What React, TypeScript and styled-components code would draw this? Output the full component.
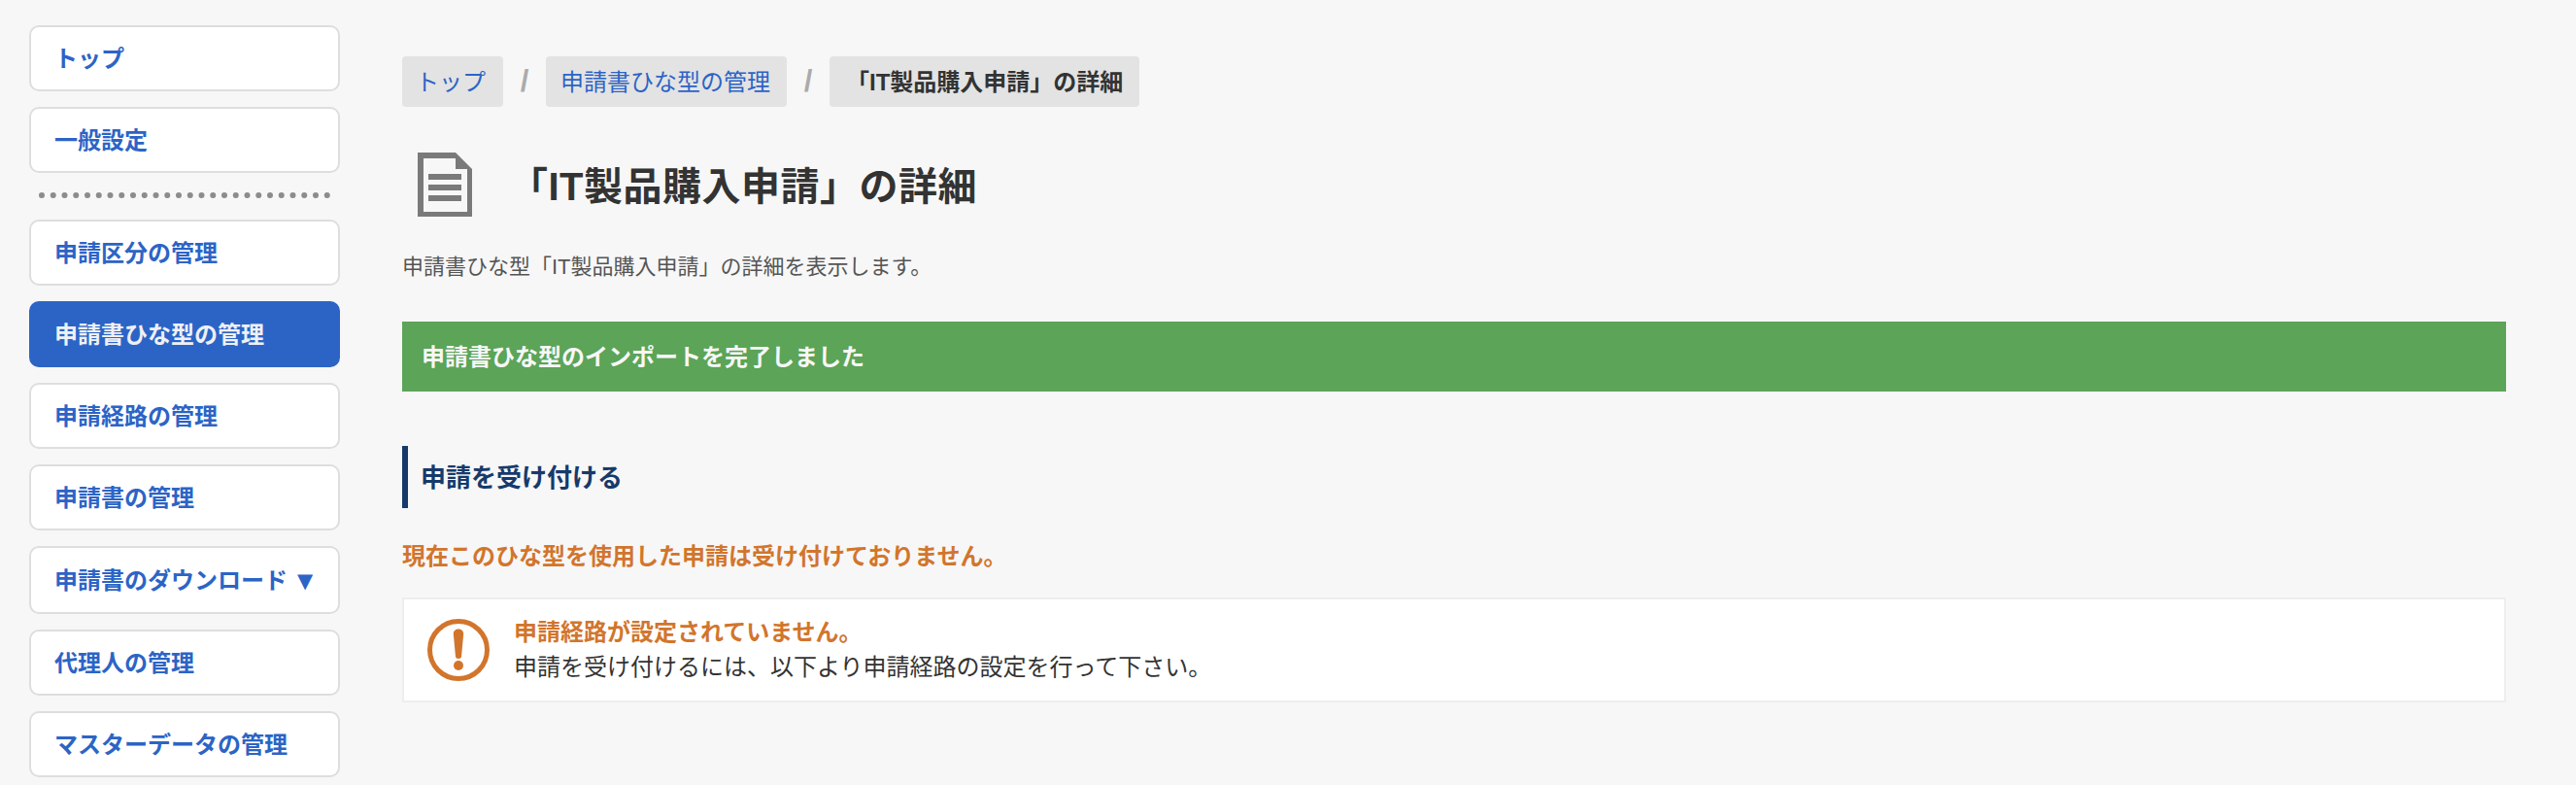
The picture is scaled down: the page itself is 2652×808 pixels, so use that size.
import React from "react";
import styled, { createGlobalStyle } from "styled-components";

const Global = createGlobalStyle`
  html, body { margin: 0; padding: 0; background: #f7f7f7; }
  body { font-family: "Liberation Sans", "Noto Sans CJK JP", sans-serif; }
  * { box-sizing: border-box; }
`;

const Page = styled.div`
  display: flex;
  align-items: flex-start;
  width: 2652px;
  height: 808px;
  overflow: hidden;
  background: #f7f7f7;
`;

const Sidebar = styled.nav`
  display: flex;
  flex-direction: column;
  flex: 0 0 320px;
  gap: 16px;
  margin: 26px 0 0 30px;
`;

const NavItem = styled.a<{ $active?: boolean; $tall?: boolean }>`
  display: flex;
  align-items: center;
  height: ${(p) => (p.$tall ? "70px" : "68px")};
  padding: 0 0 3px 24px;
  border: 2px solid ${(p) => (p.$active ? "#2c64c6" : "#dedede")};
  border-radius: 10px;
  background: ${(p) => (p.$active ? "#2c64c6" : "#fff")};
  color: ${(p) => (p.$active ? "#eef0f4" : "#2c64c6")};
  font-size: 24px;
  font-weight: 700;
  white-space: nowrap;
`;

const Caret = styled.span`
  margin: 5px 0 0 10px;
  font-size: 21px;
  line-height: 1;
  font-family: "DejaVu Sans", sans-serif;
`;

const Dots = styled.div`
  height: 6px;
  margin: 4px 10px 6px;
  border-top: 6px dotted #8c8c8c;
`;

const Main = styled.main`
  flex: 0 0 2166px;
  margin: 58px 0 0 64px;
`;

const Breadcrumb = styled.div`
  display: flex;
  align-items: center;
  height: 52px;
`;

const Crumb = styled.a<{ $current?: boolean; $first?: boolean }>`
  display: flex;
  align-items: center;
  height: 52px;
  padding: 0 ${(p) => (p.$current ? "17px" : p.$first ? "18px" : "17px")} 3px
    ${(p) => (p.$current ? "17px" : p.$first ? "14px" : "15px")};
  border-radius: 4px;
  background: #e3e3e3;
  color: ${(p) => (p.$current ? "#333" : "#2c64c6")};
  font-size: 24px;
  font-weight: ${(p) => (p.$current ? 700 : 400)};
  white-space: nowrap;
`;

const Sep = styled.span`
  width: 44px;
  text-align: center;
  color: #ababab;
  font-size: 31px;
  font-weight: 700;
`;

const TitleRow = styled.div`
  display: flex;
  align-items: center;
  height: 66px;
  margin-top: 47px;
  padding-left: 16px;
`;

const Title = styled.h1`
  margin: 0 0 2px 38px;
  color: #333;
  font-size: 40px;
  font-weight: 700;
  letter-spacing: 0.5px;
  white-space: nowrap;
`;

const Desc = styled.p`
  margin: 36px 0 0;
  color: #555;
  font-size: 22px;
  line-height: 32px;
`;

const Notice = styled.div`
  display: flex;
  align-items: center;
  height: 72px;
  margin-top: 40px;
  padding: 0 0 3px 20px;
  background: #5ba458;
  color: #f7f7f7;
  font-size: 24px;
  font-weight: 700;
`;

const SectionHead = styled.h2`
  display: flex;
  align-items: center;
  height: 64px;
  margin: 56px 0 0;
  padding: 0 0 3px 13px;
  border-left: 6px solid #163a6b;
  color: #163a6b;
  font-size: 26px;
  font-weight: 700;
`;

const Warning = styled.p`
  margin: 32px 0 0;
  color: #d2752c;
  font-size: 24px;
  font-weight: 700;
  line-height: 36px;
`;

const AlertBox = styled.div`
  display: flex;
  align-items: center;
  height: 108px;
  margin-top: 24px;
  padding-left: 24px;
  border: 2px solid #eeeeee;
  background: #fff;
`;

const AlertText = styled.div`
  display: flex;
  flex-direction: column;
  margin-left: 25px;
`;

const AlertTitle = styled.div`
  color: #d2752c;
  font-size: 24px;
  font-weight: 700;
  line-height: 36px;
`;

const AlertBody = styled.div`
  color: #333;
  font-size: 24px;
  line-height: 36px;
`;

const DocIcon = () => (
  <svg width="56" height="66" viewBox="0 0 56 66" aria-hidden="true">
    <path
      fill="#7a7a7a"
      fillRule="evenodd"
      d="M0 0H39L56 17V66H0ZM6 6V61H51V17H39V6Z"
    />
    <rect x="11" y="22" width="34" height="6" fill="#7a7a7a" />
    <rect x="11" y="33" width="34" height="6" fill="#7a7a7a" />
    <rect x="11" y="44" width="34" height="6" fill="#7a7a7a" />
  </svg>
);

const AlertIcon = () => (
  <svg width="64" height="64" viewBox="0 0 64 64" aria-hidden="true">
    <circle cx="32" cy="32" r="29.5" fill="none" stroke="#d2752c" strokeWidth="5" />
    <path fill="#d2752c" d="M32 10.5C35 10.5 37.3 12.5 37.2 15.5L35 39C34.8 41.5 29.2 41.5 29 39L26.8 15.5C26.7 12.5 29 10.5 32 10.5Z" />
    <circle cx="32" cy="48" r="5" fill="#d2752c" />
  </svg>
);

export default function App() {
  return (
    <Page>
      <Global />
      <Sidebar>
        <NavItem>トップ</NavItem>
        <NavItem>一般設定</NavItem>
        <Dots />
        <NavItem>申請区分の管理</NavItem>
        <NavItem $active>申請書ひな型の管理</NavItem>
        <NavItem>申請経路の管理</NavItem>
        <NavItem>申請書の管理</NavItem>
        <NavItem $tall>
          申請書のダウンロード<Caret>▼</Caret>
        </NavItem>
        <NavItem>代理人の管理</NavItem>
        <NavItem>マスターデータの管理</NavItem>
      </Sidebar>
      <Main>
        <Breadcrumb>
          <Crumb $first>トップ</Crumb>
          <Sep>/</Sep>
          <Crumb>申請書ひな型の管理</Crumb>
          <Sep>/</Sep>
          <Crumb $current>「IT製品購入申請」の詳細</Crumb>
        </Breadcrumb>
        <TitleRow>
          <DocIcon />
          <Title>「IT製品購入申請」の詳細</Title>
        </TitleRow>
        <Desc>申請書ひな型「IT製品購入申請」の詳細を表示します。</Desc>
        <Notice>申請書ひな型のインポートを完了しました</Notice>
        <SectionHead>申請を受け付ける</SectionHead>
        <Warning>現在このひな型を使用した申請は受け付けておりません。</Warning>
        <AlertBox>
          <AlertIcon />
          <AlertText>
            <AlertTitle>申請経路が設定されていません。</AlertTitle>
            <AlertBody>申請を受け付けるには、以下より申請経路の設定を行って下さい。</AlertBody>
          </AlertText>
        </AlertBox>
      </Main>
    </Page>
  );
}
